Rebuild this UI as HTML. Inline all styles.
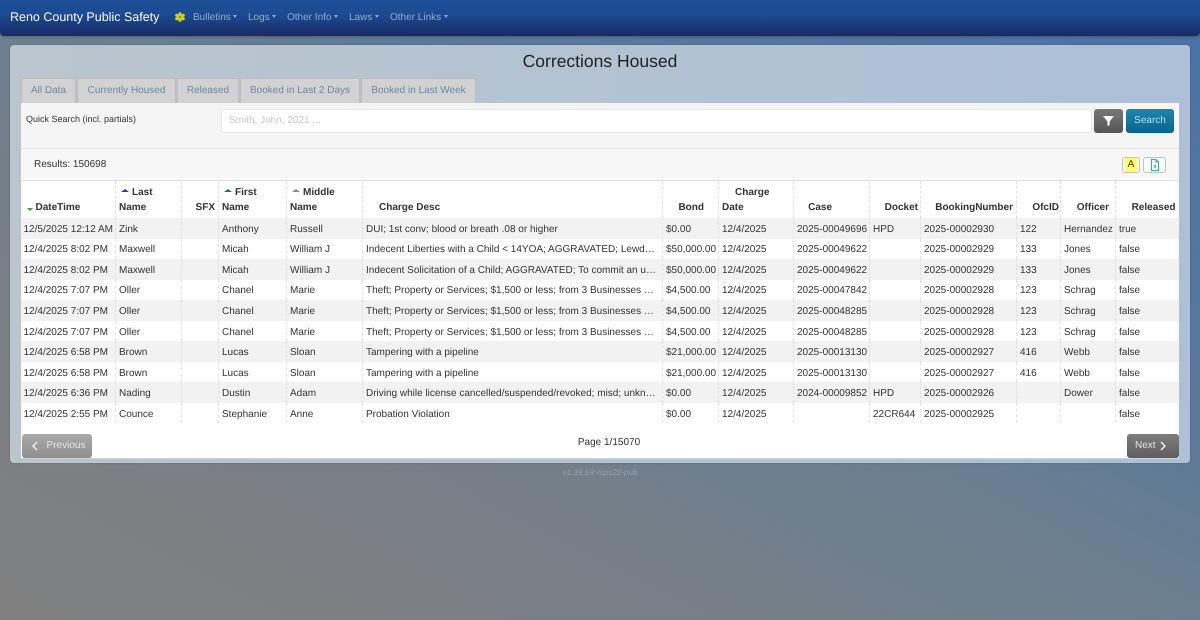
<!DOCTYPE html>
<html><head><meta charset="utf-8"><title>Corrections Housed</title>
<style>
*{box-sizing:border-box}
html,body{margin:0;padding:0;width:1200px;height:620px;overflow:hidden;font-family:"Liberation Sans",sans-serif;color:#333;text-rendering:geometricPrecision}
body{position:relative}
#bg{position:absolute;inset:0;background:linear-gradient(to bottom left,#4a70a8 0,#5c7a98 35%,#6c7f90 50%,#7c7f84 80%,#808080 100%)}
.a{position:absolute;white-space:nowrap}
#nav{left:0;top:0;width:1200px;height:36px;background:linear-gradient(to bottom,#1d4e96 0,#1b4b92 40%,#1a2a64 100%);border-radius:0 0 4px 4px;box-shadow:0 1px 2px rgba(0,0,0,.25)}
.brand{left:10px;top:10px;font-size:12.5px;line-height:15px;color:#fff}
.m{top:12px;font-size:10px;line-height:12px;color:#94a9cc}
.m:after{content:"";display:inline-block;margin-left:2.5px;vertical-align:2px;border-top:3px solid #94a9cc;border-left:2.5px solid transparent;border-right:2.5px solid transparent}
#pan{position:absolute;left:10px;top:45px;width:1180px;height:418px;border-radius:4px;background:linear-gradient(to right,#bac5cd 0,#adc0d8 100%);box-shadow:0 0 2px rgba(0,0,0,.2)}
h1{position:absolute;margin:0;left:10px;width:1180px;top:51px;text-align:center;font-weight:400;font-size:17.5px;line-height:20px;color:#222}
.tab{top:78px;height:26px;background:#d2d2d2;border:1px solid #bdbdbd;border-bottom:none;border-radius:2px 2px 0 0;color:#6d86aa;font-size:10px;line-height:24px;text-align:center}
#inner{left:21px;top:103px;width:1158px;height:355px;background:#fff}
#sb{left:21px;top:103px;width:1158px;height:46px;background:#f5f5f5;border-bottom:1px solid #e3e3e3}
#rb{left:21px;top:149px;width:1158px;height:32px;background:#f7f7f7;border-bottom:1px solid #e3e3e3}
#inp{left:221px;top:109px;width:871px;height:24px;background:#fff;border:1px solid #e6e6e6;border-radius:3px;color:#c8c8c8;font-size:10px;line-height:22px;padding-left:7px}
table{position:absolute;left:20.5px;top:181px;width:1158px;border-collapse:collapse;table-layout:fixed;font-size:10px;color:#333}
th{height:37px;padding:0 3px 3px;vertical-align:bottom;font-size:10px;line-height:15px;text-align:right;color:#333;border-right:1px dashed #e2e2e2}
td{height:20.55px;padding:3px 2px 0 3px;white-space:nowrap;overflow:visible;line-height:14px;border-right:1px dashed #e2e2e2}
td:nth-child(6){overflow:hidden;text-overflow:ellipsis;padding-right:5px}
tr:nth-child(odd) td{background:#f2f2f2}
th:last-child,td:last-child{border-right:none}
th.l{text-align:left}
.up{display:inline-block;vertical-align:3px;margin:0 3px 0 2px;border-bottom:3.5px solid #33c;border-left:4px solid transparent;border-right:4px solid transparent}
.dn{display:inline-block;vertical-align:-1px;margin:0 3px 0 5px;border-top:3.5px solid #2aa52a;border-left:3.5px solid transparent;border-right:3.5px solid transparent}
.btn{border-radius:3px;font-size:10px;text-align:center}
#wrap{left:21px;top:424px;width:1158px;height:34px;background:#fff}
</style></head><body>
<div id="bg"></div>
<div id="pan"></div>
<div class="a" id="nav"></div>
<div class="a brand">Reno County Public Safety</div>
<svg class="a" style="left:175px;top:12px" width="10" height="10" viewBox="0 0 10 10"><g fill="#d6d21c"><circle cx="5" cy="1.8" r="1.6"/><circle cx="5" cy="8.2" r="1.6"/><circle cx="1.8" cy="3.3" r="1.6"/><circle cx="8.2" cy="3.3" r="1.6"/><circle cx="1.8" cy="6.7" r="1.6"/><circle cx="8.2" cy="6.7" r="1.6"/><circle cx="5" cy="5" r="3"/></g><circle cx="5" cy="5" r="1.3" fill="#8f9a20"/></svg>
<div class="a m" style="left:193px">Bulletins</div>
<div class="a m" style="left:248px">Logs</div>
<div class="a m" style="left:287px">Other Info</div>
<div class="a m" style="left:349px">Laws</div>
<div class="a m" style="left:390px">Other Links</div>
<h1>Corrections Housed</h1>
<div class="a tab" style="left:21px;width:55px">All Data</div>
<div class="a tab" style="left:77px;width:99px">Currently Housed</div>
<div class="a tab" style="left:177px;width:62px">Released</div>
<div class="a tab" style="left:240px;width:120px">Booked in Last 2 Days</div>
<div class="a tab" style="left:361px;width:115px">Booked in Last Week</div>
<div class="a" id="inner"></div>
<div class="a" id="sb"></div>
<div class="a" style="left:26px;top:114px;font-size:9px;line-height:11px;color:#333">Quick Search (incl. partials)</div>
<div class="a" id="inp">Smith, John, 2021 ...</div>
<div class="a btn" style="left:1094px;top:109px;width:29px;height:24px;background:linear-gradient(#777,#555)"><svg class="a" style="left:9px;top:7px" width="11" height="10" viewBox="0 0 11 10"><path d="M0 0H11L6.6 5.5V9.5H4.4V5.5Z" fill="#fff"/></svg></div>
<div class="a btn" style="left:1126px;top:109px;width:48px;height:24px;background:linear-gradient(#1f86ad,#04668f);color:#b9dff0;line-height:24px">Search</div>
<div class="a" id="rb"></div>
<div class="a" style="left:34px;top:159px;font-size:10px;line-height:12px;color:#333">Results: 150698</div>
<div class="a" style="left:1122px;top:157px;width:18px;height:16px;background:#fbfbf4;border:1px solid #bcc4c8;border-radius:3px;text-align:center;font-size:10px;line-height:14px;color:#333"><span style="background:#ffff66;display:block;height:14px;line-height:14px;margin:0 2px">A</span></div>
<div class="a" style="left:1143px;top:157px;width:23px;height:16px;background:#fbfdfd;border:1px solid #b5c6cc;border-radius:3px"><svg class="a" style="left:6px;top:1px" width="10" height="12" viewBox="0 0 10 12"><path d="M1.5 .5H6L8.5 3V11.5H1.5ZM6 .5V3H8.5" fill="none" stroke="#35a5bd"/><path d="M4 6L6 9M6 6L4 9" stroke="#35a5bd" stroke-width=".8"/></svg></div>
<table>
<colgroup><col style="width:95px"><col style="width:66px"><col style="width:37px"><col style="width:68px"><col style="width:76px"><col style="width:300px"><col style="width:56px"><col style="width:75px"><col style="width:76px"><col style="width:51px"><col style="width:96px"><col style="width:44px"><col style="width:55px"><col style="width:63px"></colgroup>
<thead><tr>
<th class="l" style="padding-left:1px"><span class="dn"></span><span>DateTime</span></th>
<th class="l"><span class="up"></span>Last<br>Name</th>
<th>SFX</th>
<th class="l"><span class="up" style="border-bottom-color:#0e7a66"></span>First<br>Name</th>
<th class="l"><span class="up" style="border-bottom-color:#888"></span>Middle<br>Name</th>
<th class="l" style="padding-left:16px">Charge Desc</th>
<th style="padding-right:14px">Bond</th>
<th class="l"><span style="margin-left:13px">Charge</span><br>Date</th>
<th style="padding-right:37px">Case</th>
<th style="padding-right:2px">Docket</th>
<th style="padding-right:3px">BookingNumber</th>
<th style="padding-right:1px">OfcID</th>
<th style="padding-right:6px">Officer</th>
<th>Released</th>
</tr></thead>
<tbody>
<tr><td>12/5/2025 12:12 AM</td><td>Zink</td><td></td><td>Anthony</td><td>Russell</td><td>DUI; 1st conv; blood or breath .08 or higher</td><td>$0.00</td><td>12/4/2025</td><td>2025-00049696</td><td>HPD</td><td>2025-00002930</td><td>122</td><td>Hernandez</td><td>true</td></tr>
<tr><td>12/4/2025 8:02 PM</td><td>Maxwell</td><td></td><td>Micah</td><td>William J</td><td>Indecent Liberties with a Child &lt; 14YOA; AGGRAVATED; Lewd fondling or touching</td><td>$50,000.00</td><td>12/4/2025</td><td>2025-00049622</td><td></td><td>2025-00002929</td><td>133</td><td>Jones</td><td>false</td></tr>
<tr><td>12/4/2025 8:02 PM</td><td>Maxwell</td><td></td><td>Micah</td><td>William J</td><td>Indecent Solicitation of a Child; AGGRAVATED; To commit an unlawful sexual act</td><td>$50,000.00</td><td>12/4/2025</td><td>2025-00049622</td><td></td><td>2025-00002929</td><td>133</td><td>Jones</td><td>false</td></tr>
<tr><td>12/4/2025 7:07 PM</td><td>Oller</td><td></td><td>Chanel</td><td>Marie</td><td>Theft; Property or Services; $1,500 or less; from 3 Businesses within 72 hours</td><td>$4,500.00</td><td>12/4/2025</td><td>2025-00047842</td><td></td><td>2025-00002928</td><td>123</td><td>Schrag</td><td>false</td></tr>
<tr><td>12/4/2025 7:07 PM</td><td>Oller</td><td></td><td>Chanel</td><td>Marie</td><td>Theft; Property or Services; $1,500 or less; from 3 Businesses within 72 hours</td><td>$4,500.00</td><td>12/4/2025</td><td>2025-00048285</td><td></td><td>2025-00002928</td><td>123</td><td>Schrag</td><td>false</td></tr>
<tr><td>12/4/2025 7:07 PM</td><td>Oller</td><td></td><td>Chanel</td><td>Marie</td><td>Theft; Property or Services; $1,500 or less; from 3 Businesses within 72 hours</td><td>$4,500.00</td><td>12/4/2025</td><td>2025-00048285</td><td></td><td>2025-00002928</td><td>123</td><td>Schrag</td><td>false</td></tr>
<tr><td>12/4/2025 6:58 PM</td><td>Brown</td><td></td><td>Lucas</td><td>Sloan</td><td>Tampering with a pipeline</td><td>$21,000.00</td><td>12/4/2025</td><td>2025-00013130</td><td></td><td>2025-00002927</td><td>416</td><td>Webb</td><td>false</td></tr>
<tr><td>12/4/2025 6:58 PM</td><td>Brown</td><td></td><td>Lucas</td><td>Sloan</td><td>Tampering with a pipeline</td><td>$21,000.00</td><td>12/4/2025</td><td>2025-00013130</td><td></td><td>2025-00002927</td><td>416</td><td>Webb</td><td>false</td></tr>
<tr><td>12/4/2025 6:36 PM</td><td>Nading</td><td></td><td>Dustin</td><td>Adam</td><td>Driving while license cancelled/suspended/revoked; misd; unknown number of offenses</td><td>$0.00</td><td>12/4/2025</td><td>2024-00009852</td><td>HPD</td><td>2025-00002926</td><td></td><td>Dower</td><td>false</td></tr>
<tr><td>12/4/2025 2:55 PM</td><td>Counce</td><td></td><td>Stephanie</td><td>Anne</td><td>Probation Violation</td><td>$0.00</td><td>12/4/2025</td><td></td><td>22CR644</td><td>2025-00002925</td><td></td><td></td><td>false</td></tr>
</tbody></table>
<div class="a" id="wrap"></div>
<div class="a" style="left:21px;top:458px;width:1158px;height:1px;background:#ccd3da"></div>
<div class="a btn" style="left:22px;top:434px;width:70px;height:24px;background:linear-gradient(#aaa,#8f8f8f);color:#e6e6e6;line-height:24px;padding-left:18px">Previous<svg class="a" style="left:9px;top:7px" width="7" height="10" viewBox="0 0 7 10"><path d="M6 1L2 5L6 9" fill="none" stroke="#eee" stroke-width="1.5"/></svg></div>
<div class="a" style="left:21px;width:1176px;top:437px;line-height:12px;text-align:center;font-size:10px;color:#333">Page 1/15070</div>
<div class="a btn" style="left:1127px;top:434px;width:52px;height:24px;background:linear-gradient(#7d7d7d,#5e5e5e);color:#e6e6e6;line-height:24px;text-align:left;padding-left:8px">Next<svg class="a" style="left:33px;top:7px" width="7" height="10" viewBox="0 0 7 10"><path d="M1 1L5 5L1 9" fill="none" stroke="#eee" stroke-width="1.5"/></svg></div>
<div class="a" style="left:0;width:1200px;top:468px;text-align:center;font-size:8px;line-height:10px;font-style:italic;color:#98a0a8">v1.39.1R-rcps22-pub</div>
</body></html>
